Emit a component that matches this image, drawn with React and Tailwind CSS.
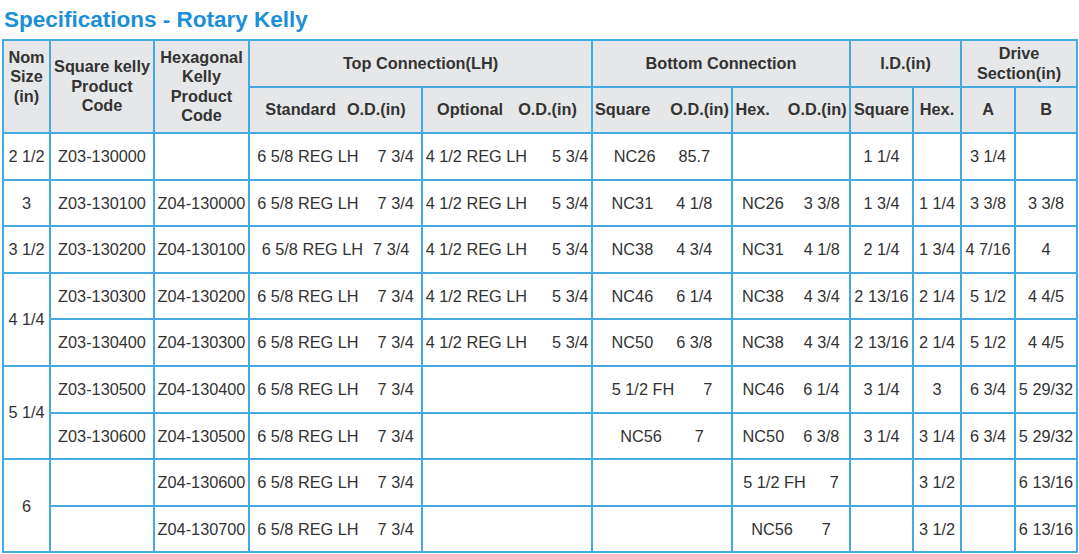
import React from "react";

const STD = ["6 5/8 REG LH", "7 3/4", 19];
const OPT = ["4 1/2 REG LH", "5 3/4", 25];

const rows = [
  { nom: "2 1/2", span: 1, sq: "Z03-130000", hx: "", std: STD, opt: OPT, bsq: ["NC26", "85.7", 23], bhx: null, ids: "1 1/4", idh: "", a: "3 1/4", b: "" },
  { nom: "3", span: 1, sq: "Z03-130100", hx: "Z04-130000", std: STD, opt: OPT, bsq: ["NC31", "4 1/8", 23], bhx: ["NC26", "3 3/8", 20], ids: "1 3/4", idh: "1 1/4", a: "3 3/8", b: "3 3/8" },
  { nom: "3 1/2", span: 1, sq: "Z03-130200", hx: "Z04-130100", std: ["6 5/8 REG LH", "7 3/4", 10], opt: OPT, bsq: ["NC38", "4 3/4", 23], bhx: ["NC31", "4 1/8", 20], ids: "2 1/4", idh: "1 3/4", a: "4 7/16", b: "4" },
  { nom: "4 1/4", span: 2, sq: "Z03-130300", hx: "Z04-130200", std: STD, opt: OPT, bsq: ["NC46", "6 1/4", 23], bhx: ["NC38", "4 3/4", 20], ids: "2 13/16", idh: "2 1/4", a: "5 1/2", b: "4 4/5" },
  { sq: "Z03-130400", hx: "Z04-130300", std: STD, opt: OPT, bsq: ["NC50", "6 3/8", 23], bhx: ["NC38", "4 3/4", 20], ids: "2 13/16", idh: "2 1/4", a: "5 1/2", b: "4 4/5" },
  { nom: "5 1/4", span: 2, sq: "Z03-130500", hx: "Z04-130400", std: STD, opt: null, bsq: ["5 1/2 FH", "7", 29], bhx: ["NC46", "6 1/4", 19], ids: "3 1/4", idh: "3", a: "6 3/4", b: "5 29/32" },
  { sq: "Z03-130600", hx: "Z04-130500", std: STD, opt: null, bsq: ["NC56", "7", 33], bhx: ["NC50", "6 3/8", 19], ids: "3 1/4", idh: "3 1/4", a: "6 3/4", b: "5 29/32" },
  { nom: "6", span: 2, sq: "", hx: "Z04-130600", std: STD, opt: null, bsq: null, bhx: ["5 1/2 FH", "7", 24], ids: "", idh: "3 1/2", a: "", b: "6 13/16" },
  { sq: "", hx: "Z04-130700", std: STD, opt: null, bsq: null, bhx: ["NC56", "7", 29], ids: "", idh: "3 1/2", a: "", b: "6 13/16" },
];

const td = "border-2 border-[#45aae0] text-center align-middle px-0 whitespace-nowrap";
const th = "border-2 border-[#45aae0] bg-[#e6e7e8] text-center align-middle px-0 font-bold leading-[19.4px] whitespace-nowrap";

function Pair({ v }) {
  if (!v) return null;
  return (
    <div className="flex justify-center items-center" style={{ gap: v[2] + "px" }}>
      <span>{v[0]}</span>
      <span>{v[1]}</span>
    </div>
  );
}

export default function App() {
  return (
    <div
      className="bg-white w-[1079px] h-[554px] overflow-hidden text-[#333333]"
      style={{ fontFamily: '"Liberation Sans", Arial, sans-serif' }}
    >
      <div className="pt-[6px] pl-[4px] h-[39px] text-[22.5px] leading-[28px] font-bold text-[#1b8fd9]">
        Specifications - Rotary Kelly
      </div>
      <div className="pl-[2px]">
        <table className="table-fixed border-collapse w-[1075px] text-[16.3px]">
          <colgroup>
            <col className="w-[47px]" />
            <col className="w-[104px]" />
            <col className="w-[95px]" />
            <col className="w-[173px]" />
            <col className="w-[170px]" />
            <col className="w-[140px]" />
            <col className="w-[118px]" />
            <col className="w-[63px]" />
            <col className="w-[48px]" />
            <col className="w-[54px]" />
            <col className="w-[62px]" />
          </colgroup>
          <thead>
            <tr className="h-[47px]">
              <th rowSpan={2} className={th + " !align-top pt-[7px]"}>
                Nom<br />Size<br />(in)
              </th>
              <th rowSpan={2} className={th}>
                Square kelly<br />Product<br />Code
              </th>
              <th rowSpan={2} className={th}>
                Hexagonal<br />Kelly<br />Product<br />Code
              </th>
              <th colSpan={2} className={th}>Top Connection(LH)</th>
              <th colSpan={2} className={th}>Bottom Connection</th>
              <th colSpan={2} className={th}>I.D.(in)</th>
              <th colSpan={2} className={th}>Drive<br />Section(in)</th>
            </tr>
            <tr className="h-[46px]">
              <th className={th}>
                <Pair v={["Standard", "O.D.(in)", 11]} />
              </th>
              <th className={th}>
                <Pair v={["Optional", "O.D.(in)", 15]} />
              </th>
              <th className={th}>
                <Pair v={["Square", "O.D.(in)", 20]} />
              </th>
              <th className={th}>
                <Pair v={["Hex.", "O.D.(in)", 18]} />
              </th>
              <th className={th}>Square</th>
              <th className={th}>Hex.</th>
              <th className={th}>A</th>
              <th className={th}>B</th>
            </tr>
          </thead>
          <tbody>
            {rows.map((r, i) => (
              <tr key={i} className="h-[46.6px]">
                {r.nom !== undefined && (
                  <td rowSpan={r.span} className={td}>{r.nom}</td>
                )}
                <td className={td}>{r.sq}</td>
                <td className={td}>{r.hx}</td>
                <td className={td}><Pair v={r.std} /></td>
                <td className={td}><Pair v={r.opt} /></td>
                <td className={td}><Pair v={r.bsq} /></td>
                <td className={td}><Pair v={r.bhx} /></td>
                <td className={td}>{r.ids}</td>
                <td className={td}>{r.idh}</td>
                <td className={td}>{r.a}</td>
                <td className={td}>{r.b}</td>
              </tr>
            ))}
          </tbody>
        </table>
      </div>
    </div>
  );
}
